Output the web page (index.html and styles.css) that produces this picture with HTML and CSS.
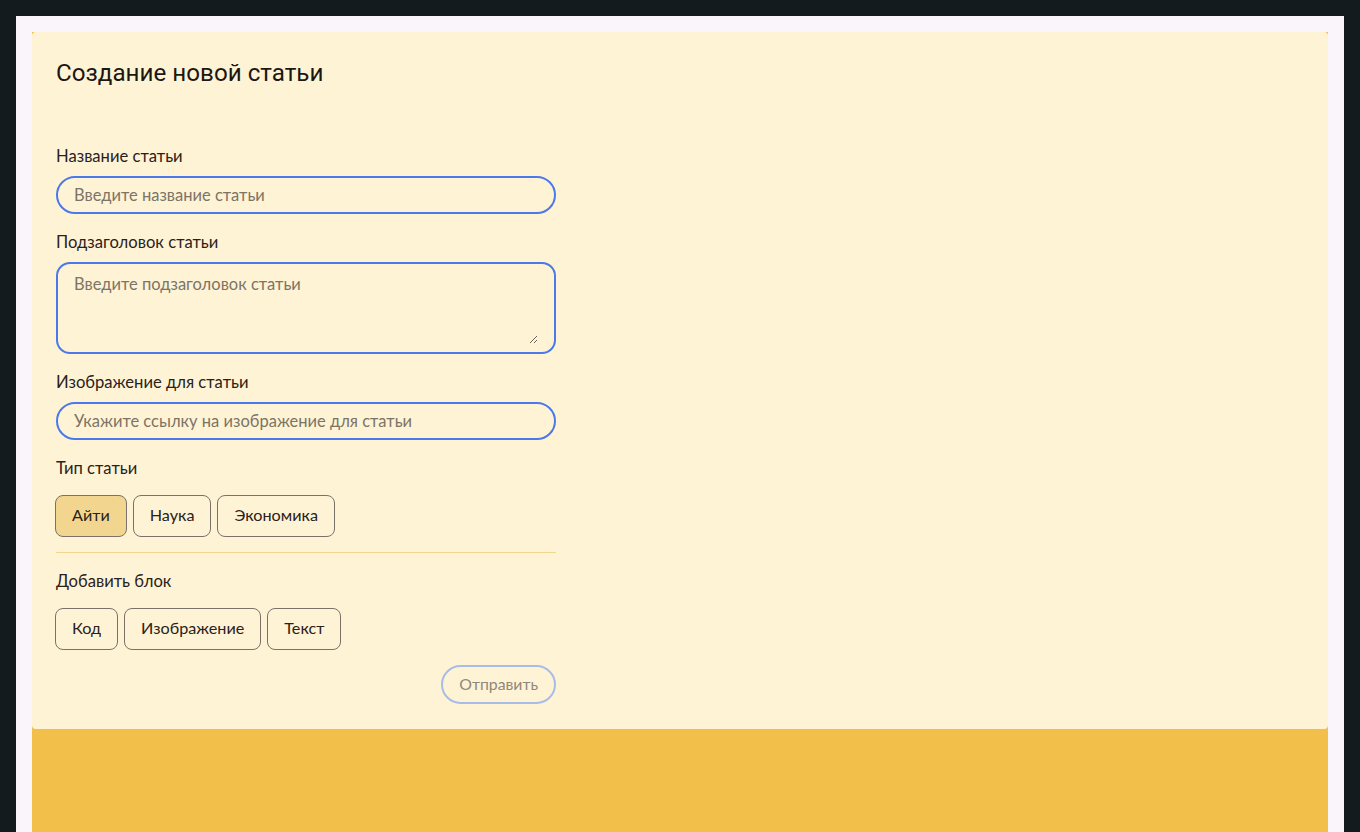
FILE: index.html
```html
<!DOCTYPE html>
<html lang="ru">
<head>
<meta charset="utf-8">
<title>Создание новой статьи</title>
<link rel="stylesheet" href="styles.css">
</head>
<body>
<div class="frame">
  <div class="stage">
    <form class="card">
      <h1 class="title">Создание новой статьи</h1>
      <div class="field">
        <label class="label">Название статьи</label>
        <input class="input" type="text" placeholder="Введите название статьи">
      </div>
      <div class="field">
        <label class="label">Подзаголовок статьи</label>
        <div class="area-box">
          <textarea class="area" placeholder="Введите подзаголовок статьи"></textarea>
        </div>
      </div>
      <div class="field">
        <label class="label">Изображение для статьи</label>
        <input class="input" type="text" placeholder="Укажите ссылку на изображение для статьи">
      </div>
      <div class="field">
        <label class="label">Тип статьи</label>
        <div class="chips">
          <button type="button" class="chip active">Айти</button>
          <button type="button" class="chip">Наука</button>
          <button type="button" class="chip">Экономика</button>
        </div>
      </div>
      <hr class="divider">
      <div class="field">
        <label class="label">Добавить блок</label>
        <div class="chips">
          <button type="button" class="chip">Код</button>
          <button type="button" class="chip">Изображение</button>
          <button type="button" class="chip">Текст</button>
        </div>
      </div>
      <div class="actions">
        <button type="button" class="submit" disabled>Отправить</button>
      </div>
    </form>
  </div>
</div>
</body>
</html>
```

FILE: styles.css
```css
html, body {
  margin: 0;
  padding: 0;
  height: 100%;
  background: #131b1f;
  overflow: hidden;
}
.frame {
  margin: 16px 16px 0 16px;
  padding: 16px 16px 0 16px;
  background: #f9f5fb;
  height: calc(100vh - 32px);
}
.stage {
  background: #f2c04a;
  height: 100%;
}
.card {
  background: #fff3d6;
  border-radius: 4px;
  padding: 25px 24px 25px 24px;
  display: flex;
  flex-direction: column;
  font-family: Lato, "Noto Sans", sans-serif;
  color: #2a2218;
}
.title {
  margin: 0 0 57px 0;
  font-family: Roboto, "Noto Sans", sans-serif;
  font-weight: 400;
  font-size: 24.2px;
  line-height: 32px;
  color: #1c1712;
}
.field {
  display: flex;
  flex-direction: column;
  width: 500px;
  margin-bottom: 18px;
}
.label {
  font-size: 16.6px;
  line-height: 20px;
  margin-bottom: 10px;
  color: #2a2218;
}
.input {
  box-sizing: border-box;
  width: 500px;
  height: 38px;
  border: 2px solid #4b79ea;
  border-radius: 19px;
  background: transparent;
  padding: 0 16px;
  font-family: Lato, "Noto Sans", sans-serif;
  font-size: 16.5px;
  color: #2a2218;
  outline: none;
}
.input::placeholder,
.area::placeholder {
  color: #7c7465;
}
.area-box {
  box-sizing: border-box;
  width: 500px;
  height: 92px;
  border: 2px solid #4b79ea;
  border-radius: 14px;
  padding: 10px 16px 8px 16px;
  display: flex;
}
.area {
  flex: 1;
  border: 0;
  padding: 0;
  margin: 0;
  background: transparent;
  resize: vertical;
  outline: none;
  font-family: Lato, "Noto Sans", sans-serif;
  font-size: 16.5px;
  line-height: 20px;
  color: #2a2218;
}
.chips {
  display: flex;
  gap: 6px;
  margin-top: 7px;
  margin-left: -1px;
}
.chip {
  height: 42px;
  padding: 0 16px 4px 16px;
  border: 1px solid #7a7268;
  border-radius: 8px;
  background: transparent;
  font-family: Lato, "Noto Sans", sans-serif;
  font-size: 16.2px;
  color: #2a2218;
}
.chip.active {
  background: #f2d68f;
}
.field:has(.chips) {
  margin-bottom: 15px;
}
.divider {
  width: 500px;
  margin: 0 0 18px 0;
  border: 0;
  border-top: 1px solid #f2d68f;
  height: 0;
}
.actions {
  width: 500px;
  display: flex;
  justify-content: flex-end;
}
.submit {
  height: 39px;
  padding: 0 16px 2px 16px;
  border: 2px solid #a9bbe9;
  border-radius: 20px;
  background: transparent;
  font-family: Lato, "Noto Sans", sans-serif;
  font-size: 15.8px;
  color: #8f887c;
}
```
